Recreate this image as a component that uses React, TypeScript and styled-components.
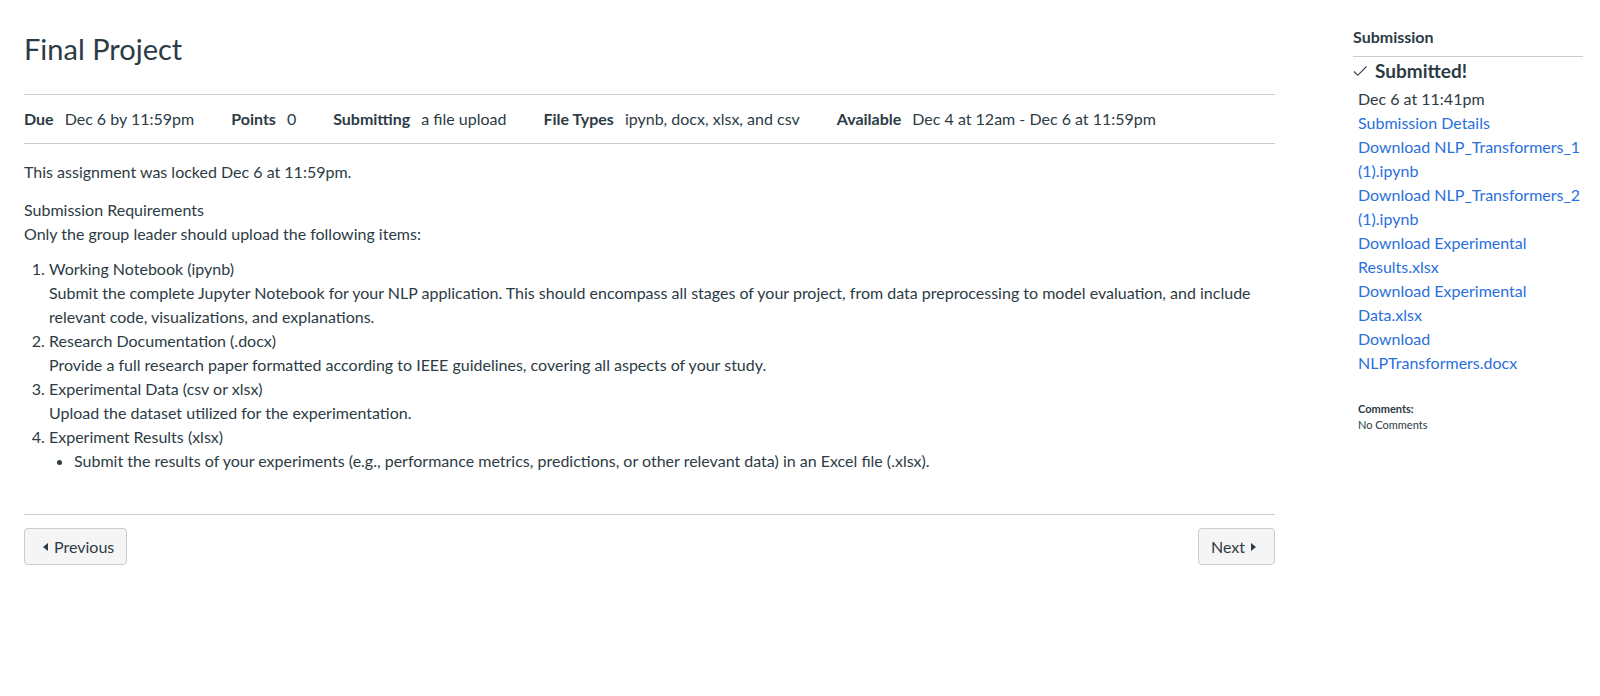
import React from "react";
import styled, { createGlobalStyle } from "styled-components";

const Global = createGlobalStyle`
  html, body { margin: 0; padding: 0; background: #fff; }
  body {
    font-family: Lato, "Noto Sans", "Liberation Sans", sans-serif;
    color: #2D3B45;
    font-size: 16px;
    line-height: 24px;
  }
  * { box-sizing: border-box; }
`;

const Page = styled.div`
  display: flex;
  align-items: flex-start;
  gap: 78px;
  padding: 0 17px 0 24px;
`;

const Main = styled.main`
  flex: 1;
  min-width: 0;
  padding-top: 30px;
`;

const Title = styled.h1`
  margin: 0 0 26px;
  font-size: 29px;
  line-height: 38px;
  font-weight: 400;
  color: #2D3B45;
`;

const Details = styled.ul`
  list-style: none;
  margin: 0;
  padding: 12px 0;
  display: flex;
  gap: 37px;
  border-top: 1px solid #C7CDD1;
  border-bottom: 1px solid #C7CDD1;
`;

const DetailItem = styled.li`
  display: flex;
  gap: 11px;
`;

const Label = styled.span`
  font-weight: 700;
`;

const Locked = styled.div`
  margin: 16px 0 14px;
`;

const Para = styled.p`
  margin: 0 0 11px;
`;

const OrderedList = styled.ol`
  margin: 0;
  padding-left: 25px;
`;

const BulletList = styled.ul`
  margin: 0;
  padding-left: 25px;
  list-style: disc;
`;

const Footer = styled.div`
  margin-top: 41px;
  border-top: 1px solid #C7CDD1;
  padding-top: 13px;
  display: flex;
  justify-content: space-between;
`;

const NavButton = styled.button`
  display: inline-flex;
  align-items: center;
  height: 37px;
  padding: 0 12px;
  background: #F5F5F5;
  border: 1px solid #C7CDD1;
  border-radius: 4px;
  font-family: inherit;
  font-size: 16px;
  color: #2D3B45;
  cursor: pointer;
`;

const Arrow = styled.span<{ $dir: "left" | "right" }>`
  display: inline-block;
  width: 0;
  height: 0;
  margin: 0 6px;
  border-top: 4px solid transparent;
  border-bottom: 4px solid transparent;
  ${(p) =>
    p.$dir === "left"
      ? "border-right: 5px solid #2D3B45;"
      : "border-left: 5px solid #2D3B45;"}
`;

const Sidebar = styled.aside`
  width: 230px;
  flex: none;
  padding-top: 27px;
`;

const SideHeading = styled.h2`
  margin: 0;
  padding-bottom: 9px;
  font-size: 16px;
  line-height: 20px;
  font-weight: 700;
  border-bottom: 1px solid #C7CDD1;
`;

const Submitted = styled.div`
  margin-top: 2px;
  display: flex;
  align-items: center;
  gap: 5px;
  font-size: 19px;
  line-height: 24px;
  font-weight: 700;
`;

const SideBody = styled.div`
  margin-top: 4px;
  padding-left: 5px;
  display: flex;
  flex-direction: column;
`;

const SideLink = styled.a`
  color: #2A6FDB;
  text-decoration: none;
  font-size: 16px;
  line-height: 24px;
`;

const Comments = styled.div`
  margin-top: 26px;
  font-size: 11px;
  line-height: 16px;
`;

const CommentsLabel = styled.div`
  font-weight: 700;
`;

const details: [string, string][] = [
  ["Due", "Dec 6 by 11:59pm"],
  ["Points", "0"],
  ["Submitting", "a file upload"],
  ["File Types", "ipynb, docx, xlsx, and csv"],
  ["Available", "Dec 4 at 12am - Dec 6 at 11:59pm"],
];

const links = [
  "Submission Details",
  "Download NLP_Transformers_1 (1).ipynb",
  "Download NLP_Transformers_2 (1).ipynb",
  "Download Experimental Results.xlsx",
  "Download Experimental Data.xlsx",
  "Download NLPTransformers.docx",
];

export default function App() {
  return (
    <>
      <Global />
      <Page>
        <Main>
          <Title>Final Project</Title>
          <Details>
            {details.map(([l, v]) => (
              <DetailItem key={l}>
                <Label>{l}</Label>
                <span>{v}</span>
              </DetailItem>
            ))}
          </Details>
          <Locked>This assignment was locked Dec 6 at 11:59pm.</Locked>
          <Para>
            Submission Requirements
            <br />
            Only the group leader should upload the following items:
          </Para>
          <OrderedList>
            <li>
              Working Notebook (ipynb)
              <br />
              Submit the complete Jupyter Notebook for your NLP application. This should encompass all stages of
              your project, from data preprocessing to model evaluation, and include relevant code, visualizations,
              and explanations.
            </li>
            <li>
              Research Documentation (.docx)
              <br />
              Provide a full research paper formatted according to IEEE guidelines, covering all aspects of your
              study.
            </li>
            <li>
              Experimental Data (csv or xlsx)
              <br />
              Upload the dataset utilized for the experimentation.
            </li>
            <li>
              Experiment Results (xlsx)
              <BulletList>
                <li>
                  Submit the results of your experiments (e.g., performance metrics, predictions, or other relevant
                  data) in an Excel file (.xlsx).
                </li>
              </BulletList>
            </li>
          </OrderedList>
          <Footer>
            <NavButton>
              <Arrow $dir="left" />
              Previous
            </NavButton>
            <NavButton>
              Next
              <Arrow $dir="right" />
            </NavButton>
          </Footer>
        </Main>
        <Sidebar>
          <SideHeading>Submission</SideHeading>
          <Submitted>
            <svg width="17" height="12" viewBox="0 0 17 12" aria-hidden="true">
              <polyline points="1,6.5 4.8,10.3 13.5,1.5" fill="none" stroke="#2D3B45" strokeWidth="1.1" />
            </svg>
            Submitted!
          </Submitted>
          <SideBody>
            <span>Dec 6 at 11:41pm</span>
            {links.map((t) => (
              <SideLink key={t} href="#">
                {t}
              </SideLink>
            ))}
            <Comments>
              <CommentsLabel>Comments:</CommentsLabel>
              <div>No Comments</div>
            </Comments>
          </SideBody>
        </Sidebar>
      </Page>
    </>
  );
}
